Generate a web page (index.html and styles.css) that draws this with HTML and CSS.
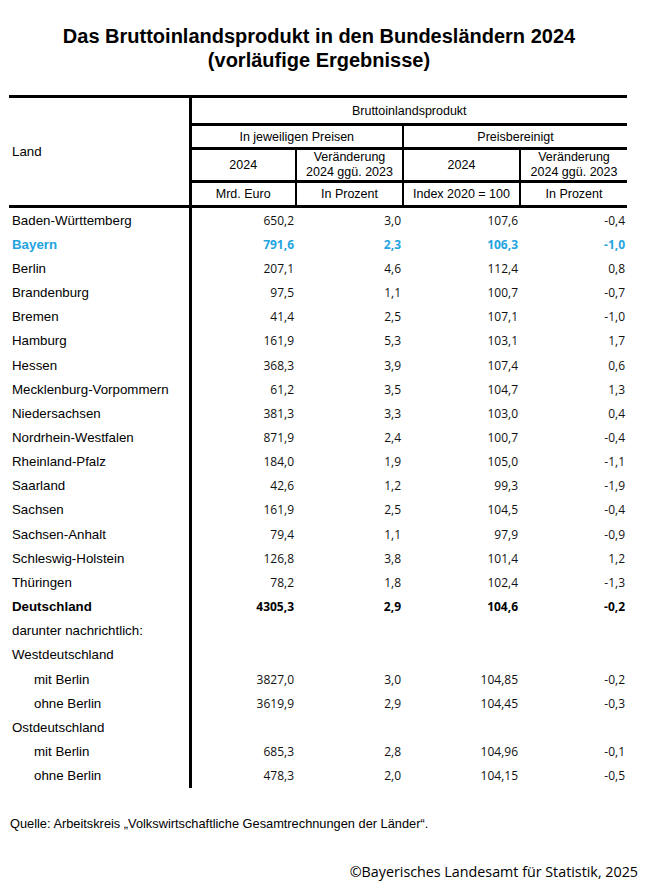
FILE: index.html
```html
<!DOCTYPE html>
<html lang="de">
<head>
<meta charset="utf-8">
<title>Das Bruttoinlandsprodukt in den Bundesländern 2024</title>
<link rel="stylesheet" href="styles.css">
</head>
<body>
<div class="page">
  <h1 class="title">Das Bruttoinlandsprodukt in den Bundesländern 2024<br>(vorläufige Ergebnisse)</h1>
  <table class="bip">
    <colgroup>
      <col class="c-land"><col class="c1"><col class="c2"><col class="c3"><col class="c4">
    </colgroup>
    <thead>
      <tr class="h1">
        <th class="land" rowspan="4">Land</th>
        <th class="vmain" colspan="4">Bruttoinlandsprodukt</th>
      </tr>
      <tr class="h2">
        <th class="vmain" colspan="2">In jeweiligen Preisen</th>
        <th class="vsub" colspan="2">Preisbereinigt</th>
      </tr>
      <tr class="h3">
        <th class="vmain">2024</th>
        <th class="vsub">Veränderung<br>2024 ggü. 2023</th>
        <th class="vsub">2024</th>
        <th class="vsub">Veränderung<br>2024 ggü. 2023</th>
      </tr>
      <tr class="h4">
        <th class="vmain">Mrd. Euro</th>
        <th class="vsub">In Prozent</th>
        <th class="vsub">Index 2020 = 100</th>
        <th class="vsub">In Prozent</th>
      </tr>
    </thead>
    <tbody>
      <tr><td class="lbl">Baden-Württemberg</td><td class="num sep">650,2</td><td class="num">3,0</td><td class="num">107,6</td><td class="num">-0,4</td></tr>
      <tr class="hl"><td class="lbl">Bayern</td><td class="num sep">791,6</td><td class="num">2,3</td><td class="num">106,3</td><td class="num">-1,0</td></tr>
      <tr><td class="lbl">Berlin</td><td class="num sep">207,1</td><td class="num">4,6</td><td class="num">112,4</td><td class="num">0,8</td></tr>
      <tr><td class="lbl">Brandenburg</td><td class="num sep">97,5</td><td class="num">1,1</td><td class="num">100,7</td><td class="num">-0,7</td></tr>
      <tr><td class="lbl">Bremen</td><td class="num sep">41,4</td><td class="num">2,5</td><td class="num">107,1</td><td class="num">-1,0</td></tr>
      <tr><td class="lbl">Hamburg</td><td class="num sep">161,9</td><td class="num">5,3</td><td class="num">103,1</td><td class="num">1,7</td></tr>
      <tr><td class="lbl">Hessen</td><td class="num sep">368,3</td><td class="num">3,9</td><td class="num">107,4</td><td class="num">0,6</td></tr>
      <tr><td class="lbl">Mecklenburg-Vorpommern</td><td class="num sep">61,2</td><td class="num">3,5</td><td class="num">104,7</td><td class="num">1,3</td></tr>
      <tr><td class="lbl">Niedersachsen</td><td class="num sep">381,3</td><td class="num">3,3</td><td class="num">103,0</td><td class="num">0,4</td></tr>
      <tr><td class="lbl">Nordrhein-Westfalen</td><td class="num sep">871,9</td><td class="num">2,4</td><td class="num">100,7</td><td class="num">-0,4</td></tr>
      <tr><td class="lbl">Rheinland-Pfalz</td><td class="num sep">184,0</td><td class="num">1,9</td><td class="num">105,0</td><td class="num">-1,1</td></tr>
      <tr><td class="lbl">Saarland</td><td class="num sep">42,6</td><td class="num">1,2</td><td class="num">99,3</td><td class="num">-1,9</td></tr>
      <tr><td class="lbl">Sachsen</td><td class="num sep">161,9</td><td class="num">2,5</td><td class="num">104,5</td><td class="num">-0,4</td></tr>
      <tr><td class="lbl">Sachsen-Anhalt</td><td class="num sep">79,4</td><td class="num">1,1</td><td class="num">97,9</td><td class="num">-0,9</td></tr>
      <tr><td class="lbl">Schleswig-Holstein</td><td class="num sep">126,8</td><td class="num">3,8</td><td class="num">101,4</td><td class="num">1,2</td></tr>
      <tr><td class="lbl">Thüringen</td><td class="num sep">78,2</td><td class="num">1,8</td><td class="num">102,4</td><td class="num">-1,3</td></tr>
      <tr class="total"><td class="lbl">Deutschland</td><td class="num sep">4305,3</td><td class="num">2,9</td><td class="num">104,6</td><td class="num">-0,2</td></tr>
      <tr><td class="lbl">darunter nachrichtlich:</td><td class="num sep"></td><td class="num"></td><td class="num"></td><td class="num"></td></tr>
      <tr><td class="lbl">Westdeutschland</td><td class="num sep"></td><td class="num"></td><td class="num"></td><td class="num"></td></tr>
      <tr><td class="lbl ind">mit Berlin</td><td class="num sep">3827,0</td><td class="num">3,0</td><td class="num">104,85</td><td class="num">-0,2</td></tr>
      <tr><td class="lbl ind">ohne Berlin</td><td class="num sep">3619,9</td><td class="num">2,9</td><td class="num">104,45</td><td class="num">-0,3</td></tr>
      <tr><td class="lbl">Ostdeutschland</td><td class="num sep"></td><td class="num"></td><td class="num"></td><td class="num"></td></tr>
      <tr><td class="lbl ind">mit Berlin</td><td class="num sep">685,3</td><td class="num">2,8</td><td class="num">104,96</td><td class="num">-0,1</td></tr>
      <tr><td class="lbl ind">ohne Berlin</td><td class="num sep">478,3</td><td class="num">2,0</td><td class="num">104,15</td><td class="num">-0,5</td></tr>
    </tbody>
  </table>
  <p class="source">Quelle: Arbeitskreis „Volkswirtschaftliche Gesamtrechnungen der Länder“.</p>
  <p class="copy">©Bayerisches Landesamt für Statistik, 2025</p>
</div>
</body>
</html>
```
FILE: styles.css
```css
html, body {
  margin: 0;
  padding: 0;
  background: #ffffff;
}

.page {
  width: 654px;
  height: 894px;
  padding: 24px 0 0 0;
  box-sizing: border-box;
  font-family: "Liberation Sans", Arial, sans-serif;
  color: #000;
}

.title {
  margin: 0;
  text-align: center;
  font-size: 20px;
  line-height: 24px;
  font-weight: bold;
  padding-right: 16px;
}

.bip {
  margin: 23px 0 0 9px;
  width: 618px;
  border-collapse: collapse;
  table-layout: fixed;
}

.c-land { width: 181px; }
.c1 { width: 106px; }
.c2 { width: 107px; }
.c3 { width: 117px; }
.c4 { width: 107px; }

.bip th {
  font-weight: normal;
  font-size: 12.5px;
  line-height: 16px;
  padding: 0;
  text-align: center;
  vertical-align: middle;
  border-top: 3px solid #000;
}

.bip th.land {
  text-align: left;
  padding-left: 3px;
  font-size: 13.3px;
  border-right: 3px solid #000;
  border-bottom: 3px solid #000;
}

.bip th.vsub {
  border-left: 2px solid #000;
}

.h1 th { height: 25px; }
.h2 th { height: 21px; }
.h3 th { height: 30px; line-height: 15px; }
.h4 th { height: 22px; border-bottom: 3px solid #000; }

.bip td {
  height: 24.17px;
  padding: 0;
  vertical-align: middle;
}

.bip td.lbl {
  font-family: "Liberation Sans", Arial, sans-serif;
  font-size: 13.3px;
  padding-left: 3px;
  white-space: nowrap;
  border-right: 3px solid #000;
}

.bip td.lbl.ind {
  padding-left: 25px;
}

.bip td.num {
  font-family: "Open Sans", "Noto Sans", sans-serif;
  font-size: 12px;
  text-align: right;
  padding-right: 2px;
  color: #111;
}

.bip tr.hl td {
  color: #1fa4e0;
  font-weight: bold;
}

.bip tr.total td {
  font-weight: bold;
  color: #000;
}

.source {
  margin: 28px 0 0 10px;
  font-size: 12.8px;
  line-height: 16px;
}

.copy {
  margin: 31px 16px 0 0;
  text-align: right;
  font-family: "Open Sans", "Noto Sans", sans-serif;
  font-size: 14.3px;
  line-height: 18px;
}
```
